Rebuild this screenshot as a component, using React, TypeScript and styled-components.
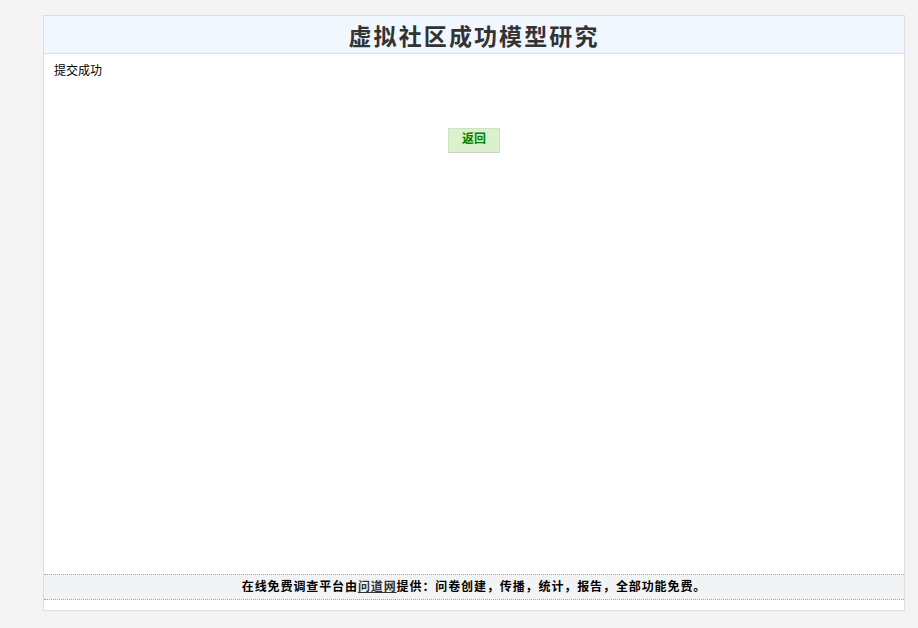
import React from 'react';
import styled, { createGlobalStyle } from 'styled-components';

const GlobalStyle = createGlobalStyle`
  html, body {
    margin: 0;
    padding: 0;
    background: #f4f4f4;
    font-family: "Liberation Sans", "Noto Sans CJK SC", sans-serif;
    font-size: 12px;
    color: #000;
  }
`;

const StyledPage = styled.div`
  padding: 15px 13px 17px 43px;
`;

const StyledWrap = styled.div`
  width: 860px;
  background: #fff;
  border: 1px solid #dcdcdc;
`;

const StyledHeader = styled.div`
  height: 37px;
  background: #f0f7fe;
  border-bottom: 1px solid #d9dee4;
  display: flex;
  align-items: center;
  justify-content: center;
`;

const StyledTitle = styled.h1`
  margin: 0;
  font-family: "Noto Sans CJK SC", sans-serif;
  font-size: 23px;
  font-weight: 700;
  letter-spacing: 2.1px;
  color: #333;
`;

const StyledBody = styled.div`
  height: 520px;
  padding: 8px 10px 0;
  box-sizing: border-box;
  display: flex;
  flex-direction: column;
`;

const StyledMessage = styled.div`
  font-family: "Noto Sans CJK SC", sans-serif;
  font-size: 12px;
  line-height: 16px;
`;

const StyledActions = styled.div`
  margin-top: 50px;
  display: flex;
  justify-content: center;
`;

const StyledButton = styled.button`
  width: 52px;
  height: 25px;
  padding: 0 0 5px;
  background: #dbf1cb;
  border: 1px solid #d0e2c4;
  border-bottom-color: #c8d4c0;
  color: #008000;
  font-family: "Noto Sans CJK SC", sans-serif;
  font-size: 12px;
  line-height: 14px;
  font-weight: 700;
  cursor: pointer;
`;

const StyledFooter = styled.div`
  height: 26px;
  padding-bottom: 3px;
  box-sizing: border-box;
  background: #f2f3f5;
  border-top: 1px dotted #a8a8a8;
  border-bottom: 1px dotted #a8a8a8;
  display: flex;
  align-items: center;
  justify-content: center;
  font-family: "Noto Sans CJK SC", sans-serif;
  font-size: 12px;
  font-weight: 700;
  letter-spacing: 0.9px;
  color: #000;
`;

const StyledLink = styled.a`
  color: #333;
  text-decoration: underline;
`;

const StyledSpacer = styled.div`
  height: 10px;
`;

const App: React.FC = () => {
  return (
    <StyledPage>
      <GlobalStyle />
      <StyledWrap>
        <StyledHeader>
          <StyledTitle>虚拟社区成功模型研究</StyledTitle>
        </StyledHeader>
        <StyledBody>
          <StyledMessage>提交成功</StyledMessage>
          <StyledActions>
            <StyledButton type="button">返回</StyledButton>
          </StyledActions>
        </StyledBody>
        <StyledFooter>
          在线免费调查平台由<StyledLink href="#">问道网</StyledLink>提供：问卷创建，传播，统计，报告，全部功能免费。
        </StyledFooter>
        <StyledSpacer />
      </StyledWrap>
    </StyledPage>
  );
};

export default App;
